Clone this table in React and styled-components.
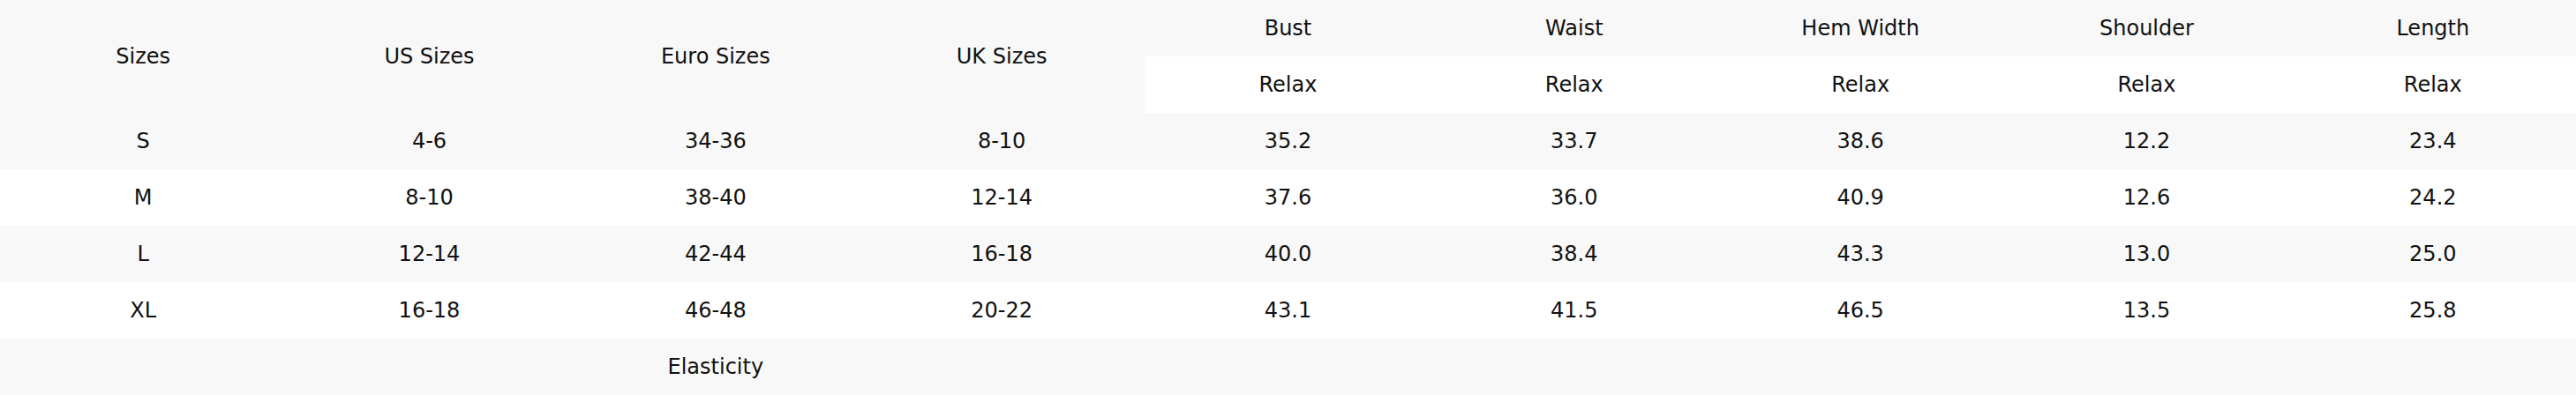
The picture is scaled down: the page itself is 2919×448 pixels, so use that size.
import React from 'react'
import styled, { createGlobalStyle } from 'styled-components'

const GlobalStyle = createGlobalStyle`
    body {
        margin: 0;
        background: #ffffff;
        font-family: "DejaVu Sans", "Liberation Sans", sans-serif;
    }
`

const Table = styled.table`
    width: 100%;
    border-collapse: collapse;
    table-layout: fixed;
    font-size: 24px;
    color: #111111;
`

const Row = styled.tr`
    height: 64px;
    background: ${(props) => (props.$striped ? '#f8f8f8' : '#ffffff')};
`

const Head = styled.th`
    font-weight: normal;
    text-align: center;
    vertical-align: middle;
    padding: 0;
    background: ${(props) => (props.$plain ? '#ffffff' : '#f8f8f8')};
`

const Cell = styled.td`
    text-align: center;
    vertical-align: middle;
    padding: 0;
`

const measures = ['Bust', 'Waist', 'Hem Width', 'Shoulder', 'Length']

const sizes = [
    ['S', '4-6', '34-36', '8-10', '35.2', '33.7', '38.6', '12.2', '23.4'],
    ['M', '8-10', '38-40', '12-14', '37.6', '36.0', '40.9', '12.6', '24.2'],
    ['L', '12-14', '42-44', '16-18', '40.0', '38.4', '43.3', '13.0', '25.0'],
    ['XL', '16-18', '46-48', '20-22', '43.1', '41.5', '46.5', '13.5', '25.8'],
]

export default function App() {
    return (
        <>
            <GlobalStyle />
            <Table>
                <thead>
                    <Row $striped>
                        <Head rowSpan={2}>Sizes</Head>
                        <Head rowSpan={2}>US Sizes</Head>
                        <Head rowSpan={2}>Euro Sizes</Head>
                        <Head rowSpan={2}>UK Sizes</Head>
                        {measures.map((m) => (
                            <Head key={m}>{m}</Head>
                        ))}
                    </Row>
                    <Row>
                        {measures.map((m) => (
                            <Head key={m} $plain>Relax</Head>
                        ))}
                    </Row>
                </thead>
                <tbody>
                    {sizes.map((row, i) => (
                        <Row key={row[0]} $striped={i % 2 === 0}>
                            {row.map((v, j) => (
                                <Cell key={j}>{v}</Cell>
                            ))}
                        </Row>
                    ))}
                    <Row $striped>
                        <Cell />
                        <Cell />
                        <Cell>Elasticity</Cell>
                        <Cell />
                        <Cell />
                        <Cell />
                        <Cell />
                        <Cell />
                        <Cell />
                    </Row>
                </tbody>
            </Table>
        </>
    )
}
